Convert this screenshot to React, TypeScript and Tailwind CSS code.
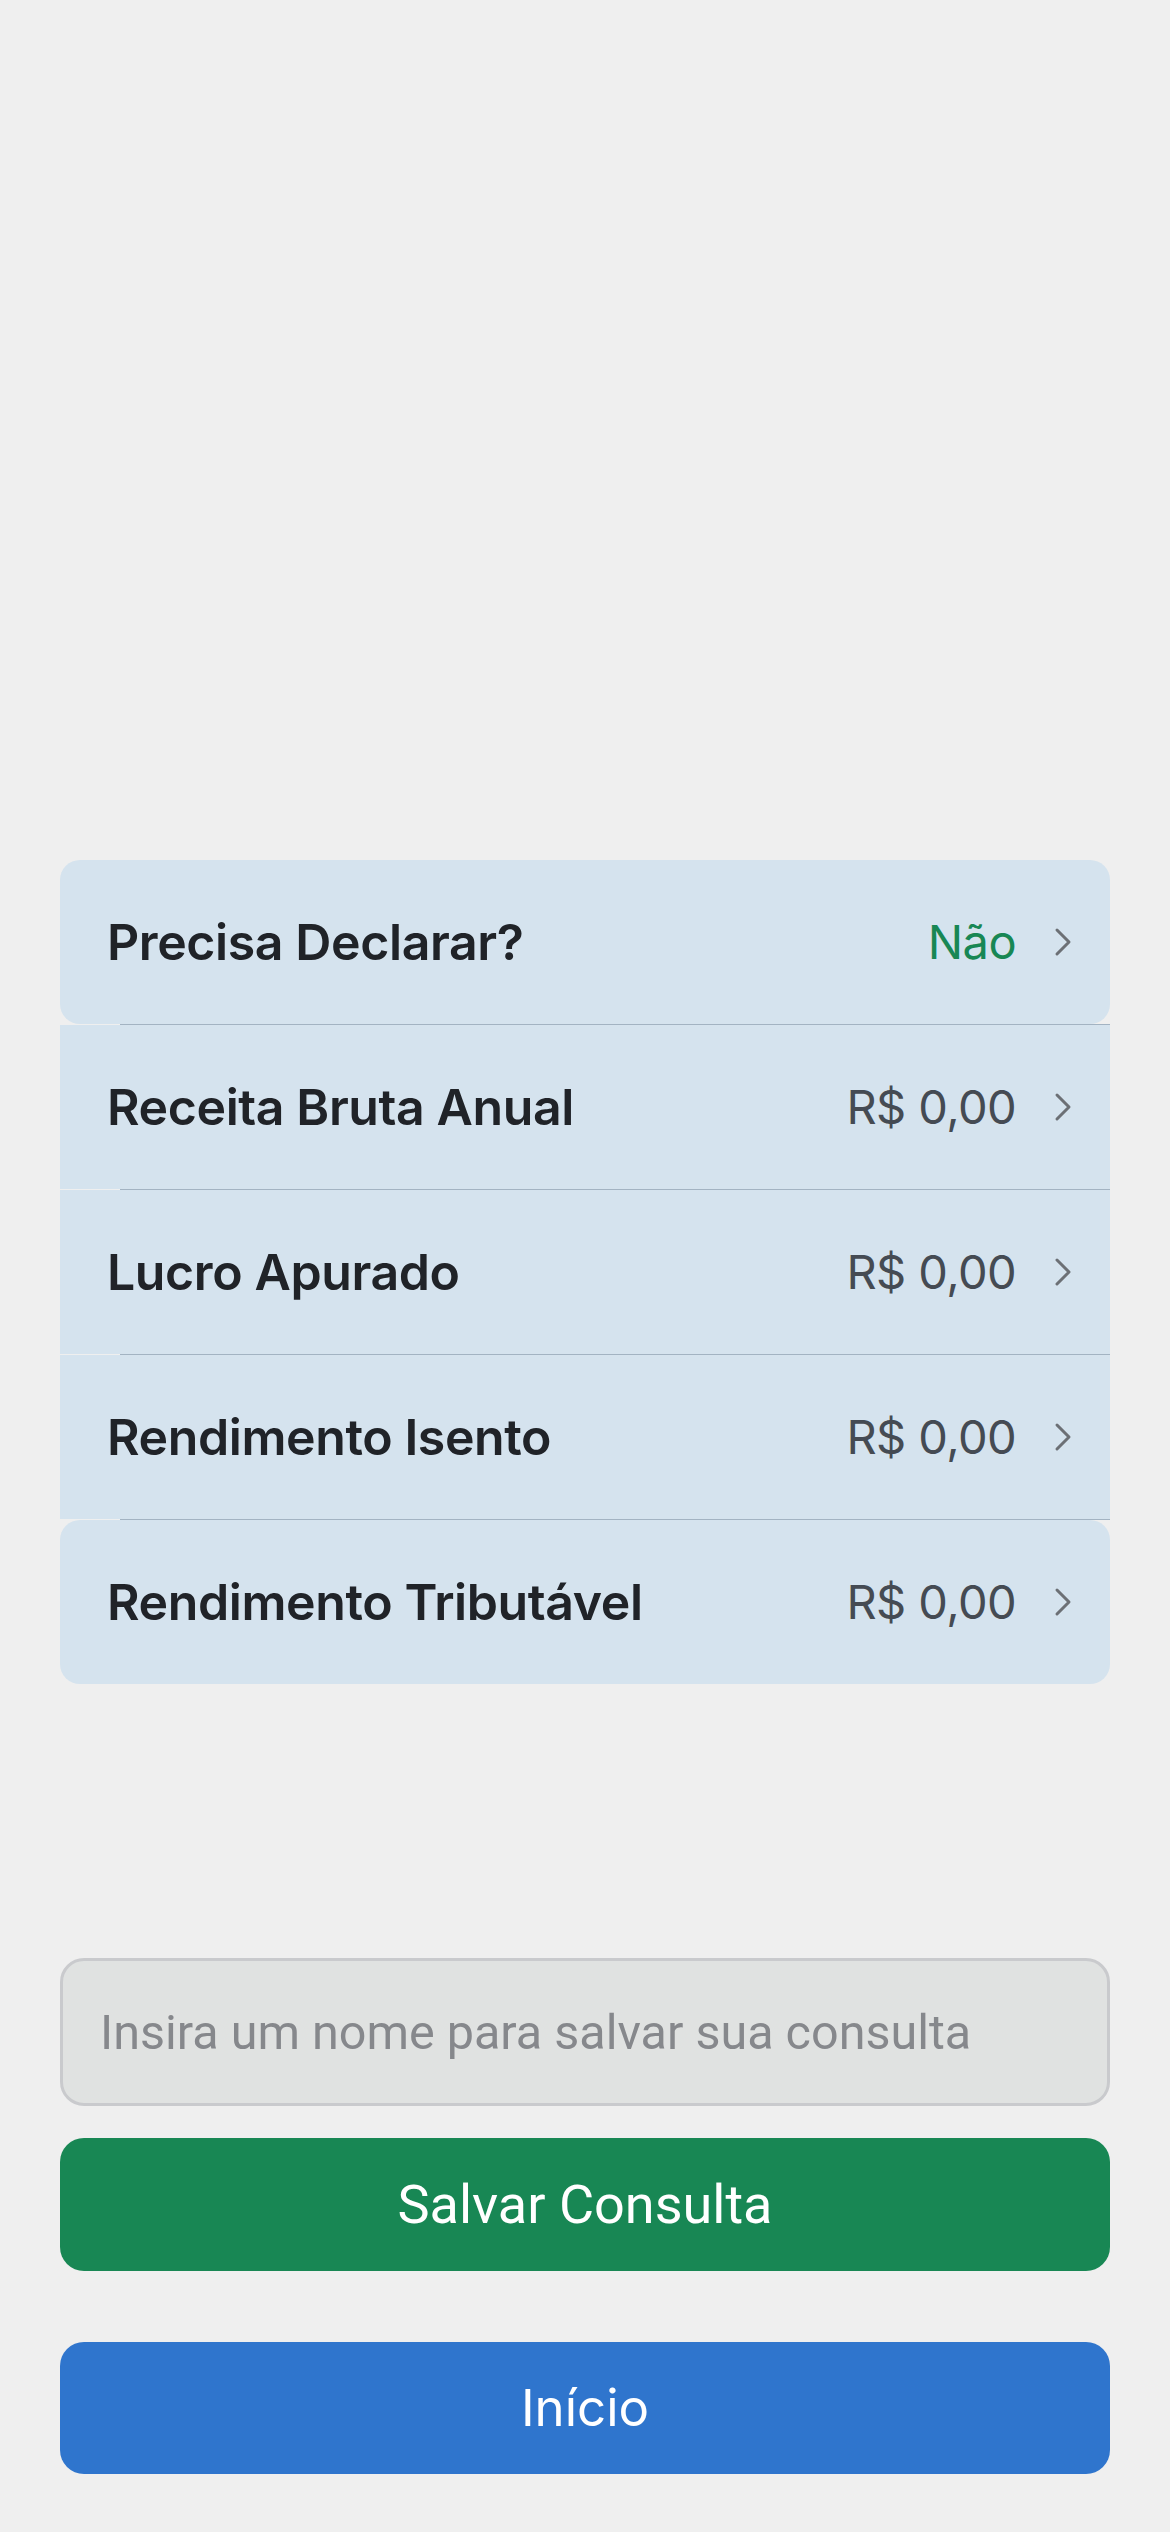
import { Fragment } from "react";

type Row = { label: string; value: string; positive?: boolean };

const rows: Row[] = [
  { label: "Precisa Declarar?", value: "Não", positive: true },
  { label: "Receita Bruta Anual", value: "R$ 0,00" },
  { label: "Lucro Apurado", value: "R$ 0,00" },
  { label: "Rendimento Isento", value: "R$ 0,00" },
  { label: "Rendimento Tributável", value: "R$ 0,00" },
];

function Chevron() {
  return (
    <svg width="18" height="30" viewBox="0 0 18 30" fill="none" className="shrink-0">
      <path d="M3 3 L15 15 L3 27" stroke="#6c7075" strokeWidth="3" strokeLinecap="round" strokeLinejoin="round" />
    </svg>
  );
}

function SummaryRow({ row, rounded }: { row: Row; rounded: boolean }) {
  return (
    <div
      className={`flex h-[164px] items-center bg-[#d5e3ee] pl-[47px] pr-[38px] ${rounded ? "rounded-[20px]" : ""}`}
    >
      <div className="flex-1 text-[50px] font-semibold tracking-[-0.4px] text-[#202328]">{row.label}</div>
      <div
        className={`mr-[38px] text-[47px] font-normal tracking-[-0.6px] ${row.positive ? "text-[#188754]" : "text-[#454b53]"}`}
      >
        {row.value}
      </div>
      <Chevron />
    </div>
  );
}

export default function App() {
  return (
    <div className="flex min-h-[2532px] flex-col bg-[#efefef] px-[60px] pt-[860px] font-['Inter','Noto_Sans',sans-serif]">
      {/* Result list */}
      <div className="flex flex-col">
        {rows.map((row, i) => (
          <Fragment key={row.label}>
            {i > 0 && (
              <div className="pl-[60px]">
                <div className="h-px bg-[#a3b3c2]" />
              </div>
            )}
            <SummaryRow row={row} rounded={i === 0 || i === rows.length - 1} />
          </Fragment>
        ))}
      </div>

      {/* Save form */}
      <input
        type="text"
        placeholder="Insira um nome para salvar sua consulta"
        className="mt-[274px] h-[148px] w-full rounded-[24px] border-[3px] border-[#c9cacd] bg-[#e0e2e1] px-[37px] font-['Roboto',sans-serif] text-[48.5px] text-[#202328] outline-none placeholder:text-[#86888c]"
      />
      <button className="mt-[32px] h-[133px] w-full rounded-[24px] bg-[#188754] font-['Roboto',sans-serif] text-[54px] text-white">
        Salvar Consulta
      </button>
      <button className="mt-[71px] h-[132px] w-full rounded-[24px] bg-[#2f75cd] font-['Inter',sans-serif] text-[51px] text-white">
        Início
      </button>
    </div>
  );
}
